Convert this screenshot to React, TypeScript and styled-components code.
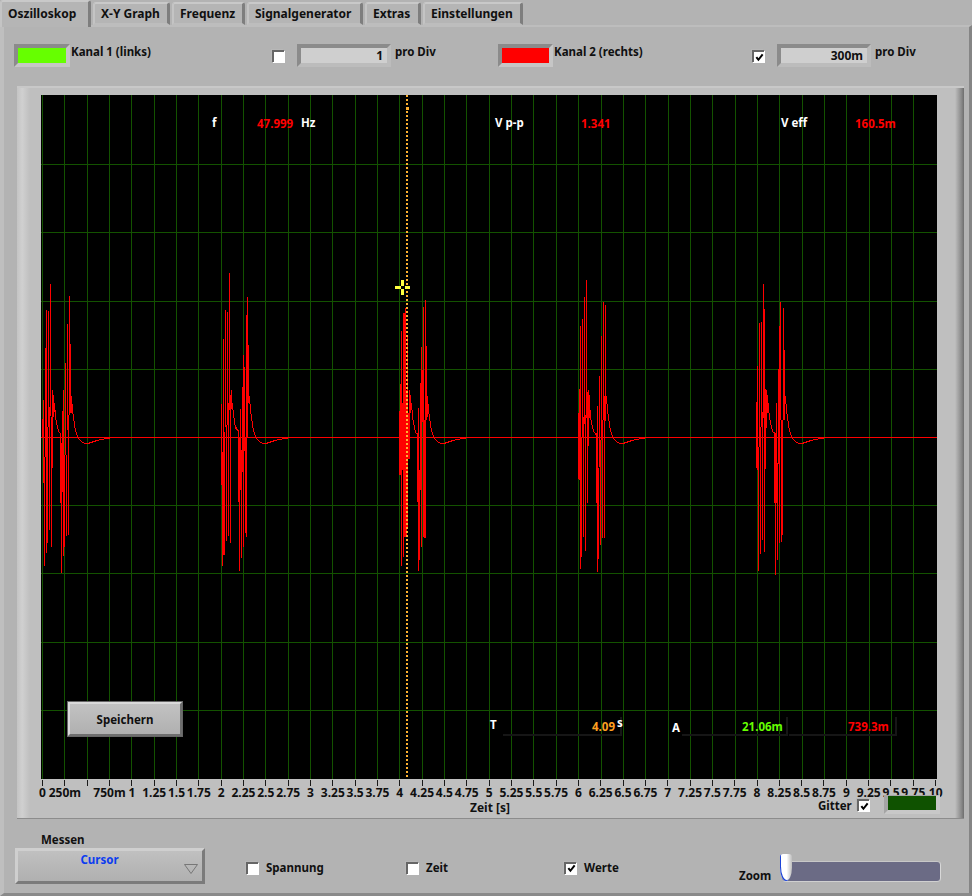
import React from 'react';
import styled, { createGlobalStyle } from 'styled-components';

const Global = createGlobalStyle`
  html, body { margin: 0; padding: 0; background: #b3b3b3; }
  * { box-sizing: border-box; }
  body { font-family: "Noto Sans", "DejaVu Sans", sans-serif; font-size: 11.5px; font-weight: 700; color: #101010; }
`;

const Page = styled.div`
  width: 972px; height: 896px; background: #b3b3b3; overflow: hidden;
  display: flex; flex-direction: column;
`;
const TabBar = styled.div`
  display: flex; height: 25px; gap: 2px; position: relative; z-index: 2; padding-top: 2px; font-size: 12px;
`;
const Tab = styled.div<{ $w: number; $active?: boolean }>`
  width: ${p => p.$w}px;
  height: ${p => (p.$active ? 27 : 23)}px;
  margin-top: ${p => (p.$active ? -2 : 0)}px;
  padding: ${p => (p.$active ? 4 : 2)}px 0 0 ${p => (p.$active ? 6 : 6)}px;
  background: #b5b5b5;
  border-top: 2px solid #c9c9c9;
  border-left: 2px solid #c4c4c4;
  border-right: 3px solid #7e7e7e;
  border-bottom: ${p => (p.$active ? 'none' : '2px solid #bdbdbd')};
  border-radius: 3px 3px 0 0;
  white-space: nowrap;
  line-height: 15px;
`;
const Panel = styled.div`
  flex: 1; display: flex; flex-direction: column; position: relative;
  border-top: 2px solid #bdbdbd;
  border-left: 4px solid #bfbfbf;
  border-right: 3px solid #858585;
  border-bottom: 3px solid #8a8a8a;
`;
const TopRow = styled.div`
  height: 59px; padding: 17px 0 0 10px;
  display: grid; grid-template-columns: 258px 226px 254px 1fr; align-items: start;
`;
const Group = styled.div`
  display: flex; align-items: flex-start;
`;
const Swatch = styled.div<{ $color: string; $w: number }>`
  width: ${p => p.$w}px; height: 23px; flex: none;
  background: ${p => p.$color};
  border: 4px solid; border-color: #8b8b8b #c6c6c6 #c6c6c6 #8b8b8b;
`;
const ChannelLabel = styled.span`
  margin-left: 1px; line-height: 15px;
`;
const Tick = styled.span`
  display: inline-flex; width: 12px; height: 12px; flex: none; align-items: center; justify-content: center;
  background: #fff; border-top: 2px solid #666; border-left: 2px solid #666;
  box-shadow: 1px 1px 0 #fff, -1px -1px 0 #b8b8b8;
`;
const TickHolder = styled.div`
  margin-top: 6px; margin-right: 13px; display: flex;
`;
const Numeric = styled.div<{ $w: number }>`
  width: ${p => p.$w}px; height: 23px; flex: none; text-align: right; padding-right: 4px; line-height: 16px; font-size: 12px;
  background: #cfcfcf; border: 4px solid; border-color: #8b8b8b #bcbcbc #bcbcbc #8b8b8b;
`;
const Unit = styled.span`
  margin-left: 4px; line-height: 15px;
`;
const Frame = styled.div`
  width: 947px; height: 733px; margin-left: 13px; position: relative; flex: none;
  background: #bfbfbf; border-top: 2px solid #c8c8c8; border-bottom: 1px solid #8c8c8c;
  padding: 7px 0 0 24px;
  &::before {
    content: ''; position: absolute; left: 0; top: 0; bottom: 0; width: 13px;
    background: linear-gradient(90deg, #c4c4c4, #d0d0d0 40%, #bfbfbf);
  }
  &::after {
    content: ''; position: absolute; right: 0; top: 0; bottom: 0; width: 9px;
    background: linear-gradient(90deg, #bfbfbf, #8a8a8a 70%, #6e6e6e);
  }
`;
const Plot = styled.div`
  width: 896px; height: 684px; background: #000; position: relative; overflow: hidden;
  svg { display: block; }
`;
const Readout = styled.span<{ $x: number; $y: number; $color?: string }>`
  position: absolute; left: ${p => p.$x}px; top: ${p => p.$y}px;
  color: ${p => p.$color || '#fff'}; line-height: 14px; font-size: 11.5px; white-space: nowrap;
`;
const SaveButton = styled.div`
  position: absolute; left: 26px; top: 606px; width: 116px; height: 36px;
  display: flex; align-items: center; justify-content: center;
  background: linear-gradient(180deg, #c2c2c2, #b0b0b0);
  border: 3px solid; border-color: #dadada #6e6e6e #6e6e6e #dadada;
  outline: 1px solid #666; outline-offset: -1px;
`;
const ValueBox = styled.div<{ $x: number; $w: number }>`
  position: absolute; left: ${p => p.$x}px; top: 622px; width: ${p => p.$w}px; height: 19px;
  border-bottom: 2px solid #161616; border-right: 2px solid #161616;
`;
const Axis = styled.div`
  display: flex; margin-left: -9.67px; font-size: 12px;
`;
const Cell = styled.div`
  width: 22.34px; flex: none; display: flex; flex-direction: column; align-items: center; height: 22px;
  &::before { content: ''; width: 1px; height: 6px; margin-top: 1px; background: #1a1a1a; flex: none; }
`;
const CellLabel = styled.span`
  white-space: nowrap; line-height: 14px;
`;
const AxisTitle = styled.div`
  width: 896px; text-align: center; line-height: 14px; padding-left: 2px; font-size: 12px;
`;
const GridControl = styled.div`
  position: absolute; left: 801px; top: 707px; display: flex; align-items: flex-start;
`;
const GridLabel = styled.span`
  line-height: 15px; margin-top: 3px; width: 33px; margin-right: 6px; white-space: nowrap;
`;
const GridTick = styled.div`
  margin-top: 4px; margin-right: 15px; display: flex;
`;
const GridSwatch = styled.div`
  width: 56px; height: 19px; background: #0f5200;
  border: 4px solid; border-top-width: 1px; border-color: #a5a5a5 #c8c8c8 #c8c8c8 #a5a5a5;
`;
const BottomRow = styled.div`
  flex: 1; padding: 13px 0 0 11px;
  display: grid; grid-template-columns: 231px 160px 158px 175px 1fr;
`;
const MeasureCol = styled.div`
  display: flex; flex-direction: column;
`;
const MeasureTitle = styled.div`
  line-height: 15px; margin-left: 26px; height: 16px;
`;
const Select = styled.div`
  width: 190px; height: 36px; position: relative; text-align: center; color: #0c3cf0; line-height: 16px; padding: 1px 21px 0 0;
  background: linear-gradient(180deg, #c0c0c0, #b0b0b0);
  border: 3px solid; border-color: #cfcfcf #7b7b7b #7b7b7b #cfcfcf;
  svg { position: absolute; left: 166px; top: 13px; }
`;
const CheckCell = styled.div`
  display: flex; align-items: center; padding-top: 29px; height: 42px; gap: 8px;
`;
const ZoomCell = styled.div`
  display: flex; align-items: flex-start; padding-top: 29px; position: relative;
`;
const ZoomLabel = styled.span`
  line-height: 15px; margin-top: 7px; width: 32px; margin-right: 11px;
`;
const Track = styled.div`
  width: 159px; height: 21px; background: #6b6b85; border-radius: 4px;
  border-top: 1px solid #c8c8c8; border-right: 1px solid #d8d8d8; border-bottom: 1px solid #d0d0d0;
`;
const Thumb = styled.div`
  position: absolute; left: 41px; top: 22px; width: 12px; height: 27px;
  background: linear-gradient(90deg, #fff 55%, #bdbdbd);
  border-radius: 4px 4px 7px 7px / 3px 3px 16px 16px;
  border-bottom-left-radius: 7px 16px;
  box-shadow: inset 1px -1px 0 #1c44d8;
`;

const LABELS = ['0', '250m', '', '750m', '1', '1.25', '1.5', '1.75', '2', '2.25', '2.5', '2.75', '3', '3.25', '3.5', '3.75', '4', '4.25', '4.5', '4.75', '5', '5.25', '5.5', '5.75', '6', '6.25', '6.5', '6.75', '7', '7.25', '7.5', '7.75', '8', '8.25', '8.5', '8.75', '9', '9.25', '9.5', '9.75', '10'];
const TABS: [string, number][] = [['Oszilloskop', 91], ['X-Y Graph', 77], ['Frequenz', 73], ['Signalgenerator', 116], ['Extras', 56], ['Einstellungen', 100]];

type Bar = [number, number, number];
const BURSTS: { x: number; tail: number; bars: Bar[] }[] = [
  { x: 30, tail: 124, bars: [[37,447,503],[40,390,638],[43,562,887],[46,235,560],[49,120,848],[52,470,820],[55,123,470],[58,410,780],[61,42,438],[64,440,830],[67,360,593],[70,375,440],[73,400,425],[76,420,450],[79,450,465],[82,465,478],[85,478,487],[88,485,490],[91,490,698],[94,520,908],[97,423,665],[100,360,857],[103,555,832],[106,280,555],[109,555,797],[112,162,480],[115,435,795],[118,78,435],[121,222,430],[124,378,430]] },
  { x: 210, tail: 118, bars: [[34,402,645],[37,545,887],[40,207,855],[43,485,855],[46,120,470],[49,465,812],[52,125,465],[55,400,797],[58,10,420],[61,375,820],[64,360,418],[67,400,420],[70,420,445],[73,445,465],[76,465,478],[79,470,480],[82,478,482],[85,480,695],[88,500,902],[91,417,660],[94,540,864],[97,350,605],[100,255,830],[103,290,543],[106,500,790],[109,135,800],[112,82,500],[115,225,400],[118,378,400]] },
  { x: 380, tail: 142, bars: [[58,424,615],[61,342,615],[64,183,887],[67,400,600],[70,130,860],[73,130,800],[76,115,800],[79,360,800],[82,200,775],[85,430,568],[88,360,568],[91,375,430],[94,400,420],[97,420,450],[100,450,465],[103,465,480],[106,480,488],[109,488,492],[112,490,695],[115,415,902],[118,600,870],[121,340,660],[124,230,830],[127,300,455],[130,110,800],[133,450,805],[136,90,805],[139,228,450],[142,378,440]] },
  { x: 565, tail: 124, bars: [[40,430,626],[43,357,630],[46,168,897],[49,500,860],[52,148,500],[55,440,800],[58,82,462],[61,435,842],[64,30,445],[67,365,698],[70,360,527],[73,375,445],[76,420,450],[79,450,465],[82,465,478],[85,478,485],[88,485,490],[91,490,495],[94,490,698],[97,408,905],[100,595,868],[103,318,590],[106,510,825],[109,198,510],[112,450,805],[115,97,450],[118,378,803],[121,105,452],[124,378,402]] },
  { x: 745, tail: 121, bars: [[34,395,595],[37,288,600],[40,530,902],[43,160,530],[46,470,852],[49,157,470],[52,425,810],[55,42,445],[58,118,845],[61,358,598],[64,360,475],[67,375,430],[70,400,430],[73,430,450],[76,450,465],[79,465,478],[82,478,485],[85,485,490],[88,485,700],[91,490,915],[94,400,700],[97,580,870],[100,298,582],[103,168,820],[106,95,450],[109,450,815],[112,450,795],[115,115,450],[118,240,450],[121,378,400]] },
];
const TAIL: [number, number][] = [[0,378],[3,425],[6,440],[9,465],[12,480],[15,490],[21,505],[26,512],[31,517],[38,520],[51,520],[61,516],[76,511],[101,506],[127,502]];

const px = (origin: number, zx: number) => Math.round(origin + zx / 3) - 41 + 0.5;
const py = (zy: number) => 270 + zy / 3 - 95;

const wavePath = BURSTS.map(b => {
  const bars = b.bars.map(([x, t, d]) => `M${px(b.x, x)} ${py(t)}V${py(d)}`).join('');
  const tail = TAIL.map(([dx, y], i) => `${i ? 'L' : 'M'}${px(b.x, b.tail + dx)} ${py(y)}`).join('');
  return bars + tail;
}).join('');

const gridXs = Array.from({ length: 40 }, (_, i) => Math.round(42 + 22.34 * i) - 41);
const gridYs = Array.from({ length: 9 }, (_, i) => Math.round(96 + 68.2 * (i + 1)) - 95);

const Check = ({ on }: { on?: boolean }) => (
  <Tick>
    {on && (
      <svg width="9" height="9" viewBox="0 0 10 10">
        <path d="M1.5 4.5 L3.8 7.5 L8.5 1.5" fill="none" stroke="#000" strokeWidth="2.2" />
      </svg>
    )}
  </Tick>
);

export default function App() {
  return (
    <Page>
      <Global />
      <TabBar>
        {TABS.map(([t, w], i) => (
          <Tab key={t} $w={w} $active={i === 0}>{t}</Tab>
        ))}
      </TabBar>
      <Panel>
        <TopRow>
          <Group>
            <Swatch $color="#66ff00" $w={56} />
            <ChannelLabel>Kanal 1 (links)</ChannelLabel>
          </Group>
          <Group>
            <TickHolder><Check /></TickHolder>
            <Numeric $w={94}>1</Numeric>
            <Unit>pro Div</Unit>
          </Group>
          <Group>
            <Swatch $color="#ff0000" $w={55} />
            <ChannelLabel>Kanal 2 (rechts)</ChannelLabel>
          </Group>
          <Group>
            <TickHolder><Check on /></TickHolder>
            <Numeric $w={94}>300m</Numeric>
            <Unit>pro Div</Unit>
          </Group>
        </TopRow>
        <Frame>
          <Plot>
            <svg width="896" height="684" shapeRendering="crispEdges">
              {gridXs.map(x => <rect key={x} x={x} y={0} width={1} height={684} fill="#135200" />)}
              {gridYs.map(y => <rect key={y} x={0} y={y} width={896} height={1} fill="#135200" />)}
              <rect x={0} y={342} width={896} height={1} fill="#ff0000" />
              <path d={wavePath} fill="none" stroke="#ff0000" strokeWidth={1} />
              <line x1={366} y1={0} x2={366} y2={684} stroke="#ffb030" strokeWidth={2} strokeDasharray="2 2" />
              <rect x={365} y={12} width={3} height={3} fill="#ffb030" />
              <g fill="#ffff40">
                <rect x={354} y={191} width={6} height={3} />
                <rect x={364} y={191} width={5} height={3} />
                <rect x={360} y={185} width={3} height={6} />
                <rect x={360} y={194} width={3} height={6} />
              </g>
            </svg>
            <Readout $x={171} $y={21}>f</Readout>
            <Readout $x={216} $y={22} $color="#ff0000">47.999</Readout>
            <Readout $x={260} $y={21}>Hz</Readout>
            <Readout $x={454} $y={21}>V p-p</Readout>
            <Readout $x={540} $y={22} $color="#ff0000">1.341</Readout>
            <Readout $x={740} $y={21}>V eff</Readout>
            <Readout $x={814} $y={22} $color="#ff0000">160.5m</Readout>
            <ValueBox $x={462} $w={119} />
            <ValueBox $x={641} $w={106} />
            <ValueBox $x={748} $w={108} />
            <Readout $x={449} $y={623}>T</Readout>
            <Readout $x={551} $y={625} $color="#ffa020">4.09</Readout>
            <Readout $x={576} $y={621}>s</Readout>
            <Readout $x={631} $y={626}>A</Readout>
            <Readout $x={701} $y={625} $color="#66ff00">21.06m</Readout>
            <Readout $x={807} $y={625} $color="#ff0000">739.3m</Readout>
            <SaveButton>Speichern</SaveButton>
          </Plot>
          <Axis>
            {LABELS.map((l, i) => (
              <Cell key={i}><CellLabel>{l}</CellLabel></Cell>
            ))}
          </Axis>
          <AxisTitle>Zeit [s]</AxisTitle>
          <GridControl>
            <GridLabel>Gitter</GridLabel>
            <GridTick><Check on /></GridTick>
            <GridSwatch />
          </GridControl>
        </Frame>
        <BottomRow>
          <MeasureCol>
            <MeasureTitle>Messen</MeasureTitle>
            <Select>
              Cursor
              <svg width="14" height="10" viewBox="0 0 14 10">
                <path d="M0.5 0.5 H13.5 L7 9.5 Z" fill="none" stroke="#777" />
              </svg>
            </Select>
          </MeasureCol>
          <CheckCell><Check />Spannung</CheckCell>
          <CheckCell><Check />Zeit</CheckCell>
          <CheckCell><Check on />Werte</CheckCell>
          <ZoomCell>
            <ZoomLabel>Zoom</ZoomLabel>
            <Track />
            <Thumb />
          </ZoomCell>
        </BottomRow>
      </Panel>
    </Page>
  );
}
